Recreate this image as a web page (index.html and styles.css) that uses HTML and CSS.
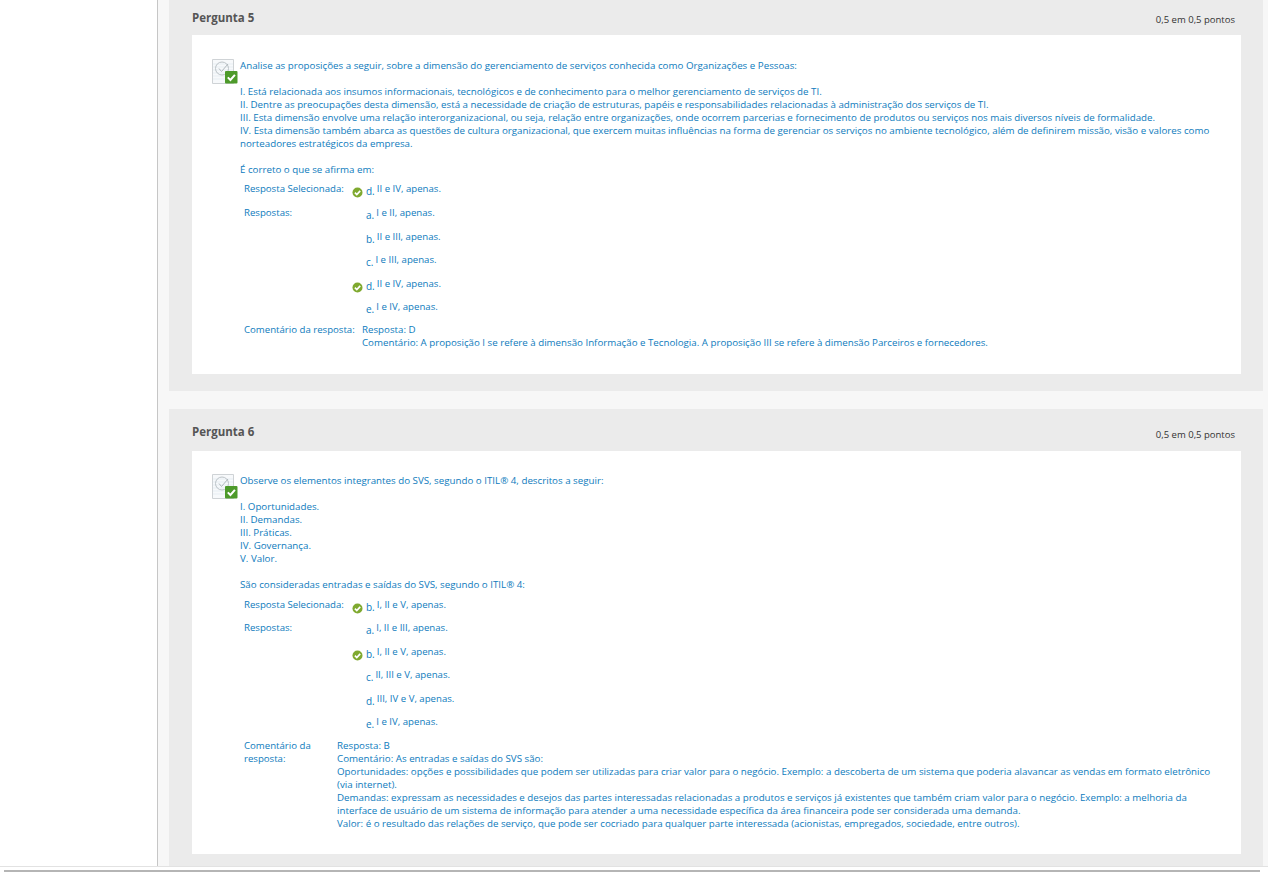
FILE: index.html
```html
<!DOCTYPE html>
<html lang="pt-BR">
<head>
<meta charset="utf-8">
<title>Perguntas</title>
<link rel="stylesheet" href="styles.css">
</head>
<body>
<svg class="defs" width="0" height="0" aria-hidden="true">
  <symbol id="q-icon" viewBox="0 0 26 26">
    <path d="M.5.5h21v24h-21z" fill="#f7f9fb" stroke="#cfd3d6"/>
    <path d="M1 5h20M1 8h20M1 11h20M1 14h20M1 17h20M1 20h20" stroke="#dfe9f0" stroke-width=".7"/>
    <circle cx="10" cy="9.500" r="6.500" fill="none" stroke="#bcc3c7" stroke-width="1"/>
    <path d="M7 9.500l2.500 3 6.500-7.500" fill="none" stroke="#b1b8bc" stroke-width="1"/>
    <rect x="13" y="12" width="12.500" height="12.500" rx="1" fill="#4d9a2a"/>
    <path d="M15.800 18.400l2.600 2.600 4.500-5.200" fill="none" stroke="#fff" stroke-width="2"/>
  </symbol>
  <symbol id="ok-icon" viewBox="0 0 11 11">
    <circle cx="5.500" cy="5.500" r="5" fill="#7fa92f"/>
    <path d="M2.900 5.600l1.900 1.900 3.400-3.600" fill="none" stroke="#fff" stroke-width="1.700"/>
  </symbol>
</svg>
<div class="page">
  <aside class="side"></aside>
  <main class="main">
    <section class="panel panel-first">
      <header class="head head-first">
        <h2 class="title">Pergunta 5</h2>
        <span class="score">0,5 em 0,5 pontos</span>
      </header>
      <div class="card card-first">
        <div class="question">
          <svg class="q-icon"><use href="#q-icon"/></svg>
          <div class="q-text">
            <p>Analise as proposições a seguir, sobre a dimensão do gerenciamento de serviços conhecida como Organizações e Pessoas:</p>
            <p>I. Está relacionada aos insumos informacionais, tecnológicos e de conhecimento para o melhor gerenciamento de serviços de TI.<br>
            II. Dentre as preocupações desta dimensão, está a necessidade de criação de estruturas, papéis e responsabilidades relacionadas à administração dos serviços de TI.<br>
            III. Esta dimensão envolve uma relação interorganizacional, ou seja, relação entre organizações, onde ocorrem parcerias e fornecimento de produtos ou serviços nos mais diversos níveis de formalidade.<br>
            IV. Esta dimensão também abarca as questões de cultura organizacional, que exercem muitas influências na forma de gerenciar os serviços no ambiente tecnológico, além de definirem missão, visão e valores como norteadores estratégicos da empresa.</p>
            <p>É correto o que se afirma em:</p>
          </div>
        </div>
        <div class="answers">
          <div class="row row-selected">
            <div class="label">Resposta Selecionada:</div>
            <div class="ans"><svg class="ok"><use href="#ok-icon"/></svg><span class="letter">d.</span><span>II e IV, apenas.</span></div>
          </div>
          <div class="row">
            <div class="label">Respostas:</div>
            <div class="ans-list">
              <div class="ans"><span class="slot"></span><span class="letter">a.</span><span>I e II, apenas.</span></div>
              <div class="ans"><span class="slot"></span><span class="letter">b.</span><span>II e III, apenas.</span></div>
              <div class="ans"><span class="slot"></span><span class="letter">c.</span><span>I e III, apenas.</span></div>
              <div class="ans"><svg class="ok"><use href="#ok-icon"/></svg><span class="letter">d.</span><span>II e IV, apenas.</span></div>
              <div class="ans"><span class="slot"></span><span class="letter">e.</span><span>I e IV, apenas.</span></div>
            </div>
          </div>
          <div class="row row-comment">
            <div class="label label-wide">Comentário da resposta:</div>
            <div class="comment">Resposta: D<br>Comentário: A proposição I se refere à dimensão Informação e Tecnologia. A proposição III se refere à dimensão Parceiros e fornecedores.</div>
          </div>
        </div>
      </div>
    </section>

    <section class="panel panel-second">
      <header class="head">
        <h2 class="title">Pergunta 6</h2>
        <span class="score">0,5 em 0,5 pontos</span>
      </header>
      <div class="card card-second">
        <div class="question">
          <svg class="q-icon"><use href="#q-icon"/></svg>
          <div class="q-text">
            <p>Observe os elementos integrantes do SVS, segundo o ITIL® 4, descritos a seguir:</p>
            <p>I. Oportunidades.<br>II. Demandas.<br>III. Práticas.<br>IV. Governança.<br>V. Valor.</p>
            <p>São consideradas entradas e saídas do SVS, segundo o ITIL® 4:</p>
          </div>
        </div>
        <div class="answers">
          <div class="row row-selected">
            <div class="label">Resposta Selecionada:</div>
            <div class="ans"><svg class="ok"><use href="#ok-icon"/></svg><span class="letter">b.</span><span>I, II e V, apenas.</span></div>
          </div>
          <div class="row">
            <div class="label">Respostas:</div>
            <div class="ans-list">
              <div class="ans"><span class="slot"></span><span class="letter">a.</span><span>I, II e III, apenas.</span></div>
              <div class="ans"><svg class="ok"><use href="#ok-icon"/></svg><span class="letter">b.</span><span>I, II e V, apenas.</span></div>
              <div class="ans"><span class="slot"></span><span class="letter">c.</span><span>II, III e V, apenas.</span></div>
              <div class="ans"><span class="slot"></span><span class="letter">d.</span><span>III, IV e V, apenas.</span></div>
              <div class="ans"><span class="slot"></span><span class="letter">e.</span><span>I e IV, apenas.</span></div>
            </div>
          </div>
          <div class="row row-comment">
            <div class="label label-narrow">Comentário da resposta:</div>
            <div class="comment">Resposta: B<br>Comentário: As entradas e saídas do SVS são:<br>
            Oportunidades: opções e possibilidades que podem ser utilizadas para criar valor para o negócio. Exemplo: a descoberta de um sistema que poderia alavancar as vendas em formato eletrônico (via internet).<br>
            Demandas: expressam as necessidades e desejos das partes interessadas relacionadas a produtos e serviços já existentes que também criam valor para o negócio. Exemplo: a melhoria da interface de usuário de um sistema de informação para atender a uma necessidade específica da área financeira pode ser considerada uma demanda.<br>
            Valor: é o resultado das relações de serviço, que pode ser cocriado para qualquer parte interessada (acionistas, empregados, sociedade, entre outros).</div>
          </div>
        </div>
      </div>
    </section>
  </main>
</div>
<footer class="bottom"><div class="scrollbar"></div></footer>
</body>
</html>
```
FILE: styles.css
```css
* { box-sizing: border-box; }
html, body { margin: 0; height: 872px; overflow: hidden; background: #fff; }
body {
  font-family: "Open Sans", "Liberation Sans", sans-serif;
  font-size: 9.75px;
  line-height: 13px;
  color: #0e7bbd;
  display: flex;
  flex-direction: column;
}
.defs { position: absolute; }
.page { display: flex; height: 866px; }
.side { width: 158px; flex: none; background: #fff; border-right: 1px solid #c6c6c6; }
.main { flex: 1; background: #f7f7f7; padding: 0 5px 0 11px; display: flex; flex-direction: column; gap: 18px; }
.panel { background: #ebebeb; padding: 0 22px 0 23px; }
.panel-first { height: 391px; }
.panel-second { height: 457px; }
.head { height: 42px; display: flex; justify-content: space-between; align-items: flex-start; padding-top: 15px; }
.head-first { height: 35px; padding-top: 10px; }
.title { margin: 0; font-size: 11.5px; line-height: 15px; font-weight: 700; color: #555; }
.score { margin: 4px 6px 0 0; font-size: 9.5px; line-height: 13px; color: #333; }
.head-first .score { margin-top: 3px; }
.card { background: #fff; padding: 24px 20px 0; }
.card-first { height: 339px; }
.card-second { height: 403px; padding-top: 23px; }
.question { display: flex; }
.q-icon { width: 26px; height: 26px; flex: none; margin-right: 2px; }
.q-text { flex: 1; }
.q-text p { margin: 0 0 13px; }
.q-text p:last-child { margin: 0; }
.answers { margin: 6px 0 0 32px; font-size: 9.65px; }
.card-second .answers { margin-top: 7px; }
.row { display: flex; }
.row-selected { margin-bottom: 11px; }
.card-second .row-selected { margin-bottom: 10px; }
.label { width: 108px; flex: none; }
.label-wide { width: 118px; }
.label-narrow { width: 93px; }
.ans-list { display: flex; flex-direction: column; }
.ans { display: flex; height: 23.6px; }
.row-selected .ans { height: 13px; }
.ok { width: 11px; height: 11px; flex: none; margin: 5px 3px 0 0; }
.slot { width: 14px; flex: none; }
.letter { font-size: 10px; margin-right: 2px; padding-top: 3px; }
.row-comment { margin-top: -1px; }
.card-second .row-comment { margin-top: 0; }
.comment { flex: 1; font-size: 9.75px; }
.card-first .comment { font-size: 9.72px; }
.bottom { height: 6px; flex: none; border-top: 1px solid #e2e2e2; background: #fff; padding: 3px 8px 0 4px; }
.scrollbar { height: 2px; background: #b5b5b5; }
```
